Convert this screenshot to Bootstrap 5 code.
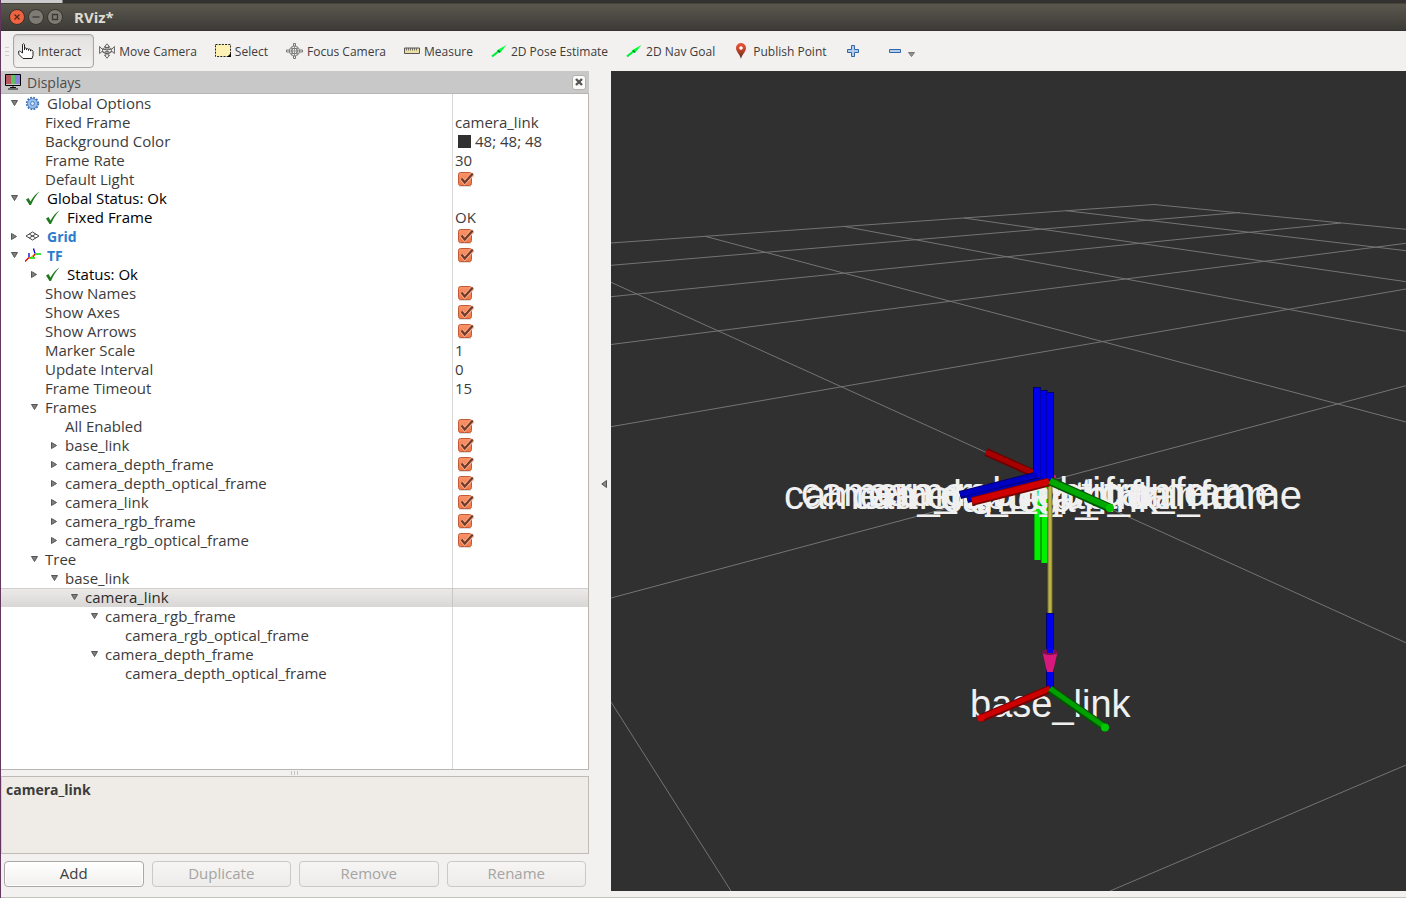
<!DOCTYPE html>
<html lang="en">
<head>
<meta charset="utf-8">
<meta name="viewport" content="width=device-width, initial-scale=1">
<title>RViz*</title>
<link href="https://cdn.jsdelivr.net/npm/bootstrap@5.3.0/dist/css/bootstrap.min.css" rel="stylesheet">
<style>
  body { font-family: "Open Sans", "Noto Sans", sans-serif; font-size: 15px; line-height: 19px; color: #3c3c3c; background: #f2f1f0; }
  .app-window { border-left: 1px solid #63355f; }
  .desk-strip { height: 3px; background: linear-gradient(90deg, #cfcccf 61px, #333230 62px); }
  .title-bar { height: 28px; padding-left: 8px; gap: 3px; background: linear-gradient(#5a574d, #3c3b37); border-bottom: 1px solid #35322f; border-top: 1px solid #45433c; color: #dfdbd2; }
  .title-bar h1 { font-size: 15px; line-height: 19px; font-weight: 700; margin: 0 0 0 8px; }
  .win-btn { width: 16px; height: 16px; padding: 0; border: 0; background: none; display: flex; }
  .tool-bar { height: 40px; padding-left: 4px; font-size: 12px; }
  .tool-btn { display: flex; align-items: center; gap: 4px; height: 34px; padding: 0 8px; border: 1px solid transparent; border-radius: 4px; background: none; color: #3c3c3c; white-space: nowrap; font-size: 12px; }
  .tool-btn svg, .tree-icon svg { display: block; flex: none; }
  .tool-btn.active { padding: 0 12px 0 4px; border-color: #aaa7a2; background: linear-gradient(#e2e1df, #f3f2f1); box-shadow: inset 0 1px 2px #cfcdca; }
  .dock { flex: 0 0 588px; }
  .dock-title { height: 23px; background: #c8c8c8; padding: 0 3px 0 4px; color: #4c4c4c; gap: 6px; border-bottom: 1px solid #b8b6b2; }
  .dock-title h2 { font-size: 14px; line-height: 19px; margin: 0; font-weight: 400; }
  .dock-close { width: 14px; height: 15px; padding: 0; border: 1px solid #b5b2ad; border-radius: 3px; background: #fbfbfa; display: flex; align-items: center; justify-content: center; }
  .tree-pane { background: linear-gradient(90deg, #fff 451px, #d9d8d6 451px, #d9d8d6 452px, #fff 452px); border-right: 1px solid #b9b6b0; border-bottom: 1px solid #b9b6b0; }
  .tree { width: 100%; table-layout: fixed; border-collapse: separate; border-spacing: 0; }
  .tree col:first-child { width: 452px; }
  .tree td { height: 19px; padding: 0 0 0 2px; white-space: nowrap; line-height: 19px; }
  .tree td:first-child { border-right: 1px solid #d9d8d6; }
  .node { display: flex; align-items: center; height: 19px; padding-left: 2px; }
  .node::before { content: ""; flex: none; width: 20px; height: 9px; }
  .opened::before { background: url("data:image/svg+xml,%3Csvg xmlns='http://www.w3.org/2000/svg' width='20' height='9'%3E%3Cpath d='M6.500 1.500h6l-3 5z' fill='%23808080' stroke='%23555'/%3E%3C/svg%3E") no-repeat; }
  .closed::before { background: url("data:image/svg+xml,%3Csvg xmlns='http://www.w3.org/2000/svg' width='20' height='9'%3E%3Cpath d='M6.500 1.500v6l5-3z' fill='%23808080' stroke='%23555'/%3E%3C/svg%3E") no-repeat; }
  .lv1 { padding-left: 22px; } .lv2 { padding-left: 42px; } .lv3 { padding-left: 62px; } .lv4 { padding-left: 82px; } .lv5 { padding-left: 102px; }
  .tree-icon { flex: none; width: 22px; }
  .state-ok { color: #000; }
  .display-name { color: #2a7ccc; font-weight: 700; font-size: 14px; }
  .row-picked { color: #2c2c2c; }
  .row-picked td { background: linear-gradient(#cfcecc 1px, #ebeae9 1px, #d8d7d5); }
  .tree .row-picked td:first-child { border-right-color: #c8c7c5; }
  .tick { appearance: none; display: block; width: 16px; height: 15px; margin: 0 0 0 3px; background: url("data:image/svg+xml,%3Csvg xmlns='http://www.w3.org/2000/svg' width='16' height='15'%3E%3Cdefs%3E%3ClinearGradient id='g' x2='0' y2='1'%3E%3Cstop stop-color='%23f9946c'/%3E%3Cstop offset='1' stop-color='%23f07746'/%3E%3C/linearGradient%3E%3C/defs%3E%3Crect x='.5' y='.5' width='13' height='13' rx='2' fill='url(%23g)' stroke='%23c35a33'/%3E%3Cpath d='M1 14.500h12' stroke='%23ddd'/%3E%3Cpath d='M3.500 6.500l3.200 4L14.800 2' fill='none' stroke='%23fbb294' stroke-width='4'/%3E%3Cpath d='M3.500 6.500l3.200 4L14.800 1.500' fill='none' stroke='%23713b29' stroke-width='2.200'/%3E%3C/svg%3E") no-repeat; }
  .swatch { width: 13px; height: 13px; background: #303030; margin: 0 4px 0 3px; }
  .dock-split { height: 6px; }
  .grip { width: 8px; height: 4px; background: repeating-linear-gradient(90deg, #c4c2bf 0 1px, transparent 1px 3px); }
  .help-pane { height: 78px; padding: 3px 4px; background: #efebe6; border: 1px solid #bfbcb6; border-left-color: #d5d2cd; font-weight: 700; font-size: 14px; }
  .actions { gap: 8px; padding: 7px 3px 5px 3px; height: 43px; }
  .act-btn { flex: 1 1 0; height: 26px; padding: 0 0 2px; border: 1px solid #aaa8a4; border-radius: 4px; background: linear-gradient(#fff, #f1f0ee); box-shadow: inset 0 0 0 1px #fff; color: #3c3c3c; font-size: 15px; line-height: 19px; }
  .act-btn:disabled { color: #a5a4a2; border-color: #cbc9c6; background: linear-gradient(#f6f5f4, #edecea); box-shadow: none; }
  .split { flex: 0 0 22px; }
  .scene { background: #303030; margin-bottom: 6px; min-width: 0; }
  .scene text { font-family: "Liberation Sans", Arial, sans-serif; fill: #f0f0f0; }
  .bottom-line { height: 1px; background: #c4c2bf; }
</style>
</head>
<body>
<svg width="0" height="0" class="position-absolute" aria-hidden="true">
  <symbol id="ok" viewBox="0 0 16 15"><path d="M1 8.500L3.500 7l2 3.500C8 6 10.500 3 14.500.5 10.500 5 8 9 6 14H4.500z" fill="#1d7a1d"/></symbol>
  <symbol id="pose" viewBox="0 0 16 16"><path d="M1 13.500L8 8" stroke="#0e3" stroke-width="2.200"/><path d="M15.500 2L5.500 7.500l3.500 2.500z" fill="#0f3"/><path d="M7 7.500l1.800 1.800" stroke="#063" stroke-width="1.400"/></symbol>
</svg>
<div class="app-window d-flex flex-column min-vh-100">
  <div class="desk-strip"></div>
  <header class="title-bar d-flex align-items-center">
    <button class="win-btn" aria-label="Close"><svg width="16" height="16"><circle cx="8" cy="8" r="7.500" fill="#ee6440" stroke="#3a2f2a"/><path d="M5.500 5.500l5 5m0-5l-5 5" stroke="#5b2a1b" stroke-width="1.400"/></svg></button>
    <button class="win-btn" aria-label="Minimize"><svg width="16" height="16"><circle cx="8" cy="8" r="7.500" fill="#7e7b73" stroke="#35342f"/><path d="M4.500 8h7" stroke="#3a3935" stroke-width="1.300"/></svg></button>
    <button class="win-btn" aria-label="Maximize"><svg width="16" height="16"><circle cx="8" cy="8" r="7.500" fill="#7e7b73" stroke="#35342f"/><path d="M5.500 5.500h5v5h-5z" fill="none" stroke="#3a3935" stroke-width="1.300"/></svg></button>
    <h1>RViz*</h1>
  </header>

  <nav class="tool-bar d-flex align-items-center" aria-label="Tools">
    <svg class="me-1" width="4" height="9"><path d="M0 .5h4M0 4.500h4M0 8.500h4" stroke="#cfcdca"/></svg>
    <button class="tool-btn active"><svg width="16" height="16" viewBox="0 0 16 16"><path d="M4.500 10V1.500q1-1.500 2 0V7 5.500q1.200-1 2 0V7 6q1.200-1 2 0v1.500-1q1.200-1 2 0V8q1-1.500 2-.5l.5 1v4l-1 3h-9L1 11.500.5 8.500q1-1 2 0z" fill="#fff" stroke="#222"/></svg>Interact</button>
    <button class="tool-btn ps-1"><svg width="16" height="16" viewBox="0 0 16 16" fill="#f2f1f0" stroke="#555" stroke-width=".9"><path d="M8 .8l2.500 3H9v8.400h1.500L8 15.200l-2.500-3H7V3.800H5.500z"/><path d="M.6 3.500v7L3 8.500l2.500.8L8 8l2.500 1.300 2.500-.8 2.400 2v-7L13 6 8 7 3 6z"/><ellipse cx="8" cy="7.500" rx="4.500" ry="3" fill="none"/></svg>Move Camera</button>
    <button class="tool-btn"><svg width="16" height="16" viewBox="0 0 16 16"><path d="M.5 1.500h15v12H.5z" fill="#fdf2b4" stroke="#222" stroke-dasharray="2 1.200"/><path d="M16 10v4h-4z"/></svg>Select</button>
    <button class="tool-btn"><svg width="17" height="16" viewBox="0 0 17 16" fill="none" stroke="#777"><circle cx="8.500" cy="8" r="5"/><circle cx="8.500" cy="8" r="2.800"/><path d="M8.500 3v10M3.500 8h10M5 5.500h7M5 10.500h7M6 4v8m5-8v8" stroke-width=".7"/><path d="M7.500 3V.5h2V3M7.500 13v2.500h2V13M3.500 7H.5v2h3M13.500 7h3v2h-3"/></svg>Focus Camera</button>
    <button class="tool-btn"><svg width="16" height="16" viewBox="0 0 16 16"><path d="M.5 5h15v5.500H.5z" fill="#eedfa5" stroke="#555"/><path d="M2.500 5v2.500m2-2.500v2.500m2-2.500v2.500m2-2.500v2.500m2-2.500v2.500m2-2.500v2.500" stroke="#555" stroke-width=".8"/></svg>Measure</button>
    <button class="tool-btn"><svg width="16" height="16"><use href="#pose"/></svg>2D Pose Estimate</button>
    <button class="tool-btn"><svg width="16" height="16"><use href="#pose"/></svg>2D Nav Goal</button>
    <button class="tool-btn"><svg width="16" height="16" viewBox="0 0 16 16"><defs><linearGradient id="pin" x2="0" y2="1"><stop stop-color="#ee5535"/><stop offset=".5" stop-color="#b8412a"/><stop offset="1" stop-color="#4a2814"/></linearGradient></defs><path d="M8 0a5 5 0 0 1 5 5c0 4-4 6-5 11C7 11 3 9 3 5a5 5 0 0 1 5-5z" fill="url(#pin)"/><circle cx="8" cy="5" r="1.800" fill="#fff"/></svg>Publish Point</button>
    <button class="tool-btn" aria-label="Add tool"><svg width="16" height="16" viewBox="0 0 16 16"><path d="M6.500 2.500h3v4h4v3h-4v4h-3v-4h-4v-3h4z" fill="#b4cdea" stroke="#3067ab"/></svg></button>
    <button class="tool-btn ms-2" aria-label="Remove tool"><svg width="29" height="16" viewBox="0 0 29 16"><path d="M2.500 6.500h11v3h-11z" fill="#b4cdea" stroke="#3067ab"/><path d="M21.500 9.500h6l-3 4z" fill="#909090" stroke="#777"/></svg></button>
  </nav>

  <main class="d-flex flex-grow-1">
    <section class="dock d-flex flex-column" aria-label="Displays">
      <div class="dock-title d-flex align-items-center">
        <svg width="16" height="16" viewBox="0 0 16 16"><path d="M1 1h5v9H1z" fill="#b65560"/><path d="M6 1h4v9H6z" fill="#5fc063"/><path d="M10 1h5v9h-5z" fill="#8780dc"/><path d="M.5.500h15v11H.5z" fill="none" stroke="#000"/><path d="M5 13.500h6M3 15h10M8 11v3" stroke="#111"/></svg>
        <h2>Displays</h2>
        <button class="dock-close ms-auto" aria-label="Close panel"><svg width="8" height="8"><path d="M1 1l6 6m0-6L1 7" stroke="#555" stroke-width="2.400"/></svg></button>
      </div>

      <div class="tree-pane flex-grow-1">
        <table class="tree" aria-label="Display properties">
          <colgroup><col><col></colgroup>
          <tbody>
          <tr><td><div class="node opened"><span class="tree-icon"><svg width="15" height="15" viewBox="-7.500 -7.500 15 15"><circle r="5.800" fill="none" stroke="#3c74b8" stroke-width="1.800" stroke-dasharray="1.800 1.240"/><circle r="5" fill="#9dbfe8" stroke="#4a82c4"/><circle r="2" fill="#d5e4f6" stroke="#4a82c4"/></svg></span>Global Options</div></td><td></td></tr>
          <tr><td><div class="node lv1">Fixed Frame</div></td><td>camera_link</td></tr>
          <tr><td><div class="node lv1">Background Color</div></td><td><div class="d-flex align-items-center"><span class="swatch"></span>48; 48; 48</div></td></tr>
          <tr><td><div class="node lv1">Frame Rate</div></td><td>30</td></tr>
          <tr><td><div class="node lv1"><label for="c1">Default Light</label></div></td><td><input class="tick" type="checkbox" id="c1" checked></td></tr>
          <tr class="state-ok"><td><div class="node opened"><span class="tree-icon"><svg width="16" height="15"><use href="#ok"/></svg></span>Global Status: Ok</div></td><td></td></tr>
          <tr><td><div class="node lv1 state-ok"><span class="tree-icon"><svg width="16" height="15"><use href="#ok"/></svg></span>Fixed Frame</div></td><td>OK</td></tr>
          <tr><td><div class="node closed"><span class="tree-icon"><svg width="15" height="11" viewBox="0 0 15 11" fill="none" stroke="#444"><path d="M7.500 1l6.500 4-6.500 4L1 5zM4.200 3l6.600 4M10.800 3L4.200 7"/></svg></span><label class="display-name" for="c2">Grid</label></div></td><td><input class="tick" type="checkbox" id="c2" checked></td></tr>
          <tr><td><div class="node opened"><span class="tree-icon"><svg width="16" height="15" viewBox="0 0 16 15" fill="none" stroke-width="1.300"><path d="M10 6L5 10" stroke="#e8c020"/><path d="M4 9.500V5M10 5.500L8.500.500" stroke="#00d"/><path d="M4 9.500l-4 4M10 6L8 9" stroke="#e00"/><path d="M4 10h6M10 6h6" stroke="#0d0"/></svg></span><label class="display-name" for="c3">TF</label></div></td><td><input class="tick" type="checkbox" id="c3" checked></td></tr>
          <tr class="state-ok"><td><div class="node lv1 closed"><span class="tree-icon"><svg width="16" height="15"><use href="#ok"/></svg></span>Status: Ok</div></td><td></td></tr>
          <tr><td><div class="node lv1"><label for="c4">Show Names</label></div></td><td><input class="tick" type="checkbox" id="c4" checked></td></tr>
          <tr><td><div class="node lv1"><label for="c5">Show Axes</label></div></td><td><input class="tick" type="checkbox" id="c5" checked></td></tr>
          <tr><td><div class="node lv1"><label for="c6">Show Arrows</label></div></td><td><input class="tick" type="checkbox" id="c6" checked></td></tr>
          <tr><td><div class="node lv1">Marker Scale</div></td><td>1</td></tr>
          <tr><td><div class="node lv1">Update Interval</div></td><td>0</td></tr>
          <tr><td><div class="node lv1">Frame Timeout</div></td><td>15</td></tr>
          <tr><td><div class="node lv1 opened">Frames</div></td><td></td></tr>
          <tr><td><div class="node lv2"><label for="c7">All Enabled</label></div></td><td><input class="tick" type="checkbox" id="c7" checked></td></tr>
          <tr><td><div class="node lv2 closed"><label for="c8">base_link</label></div></td><td><input class="tick" type="checkbox" id="c8" checked></td></tr>
          <tr><td><div class="node lv2 closed"><label for="c9">camera_depth_frame</label></div></td><td><input class="tick" type="checkbox" id="c9" checked></td></tr>
          <tr><td><div class="node lv2 closed"><label for="c10">camera_depth_optical_frame</label></div></td><td><input class="tick" type="checkbox" id="c10" checked></td></tr>
          <tr><td><div class="node lv2 closed"><label for="c11">camera_link</label></div></td><td><input class="tick" type="checkbox" id="c11" checked></td></tr>
          <tr><td><div class="node lv2 closed"><label for="c12">camera_rgb_frame</label></div></td><td><input class="tick" type="checkbox" id="c12" checked></td></tr>
          <tr><td><div class="node lv2 closed"><label for="c13">camera_rgb_optical_frame</label></div></td><td><input class="tick" type="checkbox" id="c13" checked></td></tr>
          <tr><td><div class="node lv1 opened">Tree</div></td><td></td></tr>
          <tr><td><div class="node lv2 opened">base_link</div></td><td></td></tr>
          <tr class="row-picked"><td><div class="node lv3 opened">camera_link</div></td><td></td></tr>
          <tr><td><div class="node lv4 opened">camera_rgb_frame</div></td><td></td></tr>
          <tr><td><div class="node lv5">camera_rgb_optical_frame</div></td><td></td></tr>
          <tr><td><div class="node lv4 opened">camera_depth_frame</div></td><td></td></tr>
          <tr><td><div class="node lv5">camera_depth_optical_frame</div></td><td></td></tr>
          </tbody>
        </table>
      </div>
      <div class="dock-split d-flex justify-content-center align-items-center"><span class="grip"></span></div>
      <div class="help-pane">camera_link</div>
      <div class="actions d-flex">
        <button class="act-btn">Add</button>
        <button class="act-btn" disabled>Duplicate</button>
        <button class="act-btn" disabled>Remove</button>
        <button class="act-btn" disabled>Rename</button>
      </div>
    </section>

    <div class="split d-flex align-items-center justify-content-center"><svg class="ms-2" width="6" height="8"><path d="M5.500.500v7L.8 4z" fill="#888" stroke="#555"/></svg></div>

    <section class="scene flex-grow-1 position-relative" aria-label="3D view">
      <svg class="position-absolute w-100 h-100" viewBox="611 71 795 820" preserveAspectRatio="xMidYMid slice">
        <!-- ground grid -->
        <g stroke="#747474" fill="none">
          <path d="M611 243L1154 204.500M611 265.300L1240 212.500M611 296.700L1341 223M611 344.500L1406 243.300M611 426.700L1406 289M611 598L1406 385.700M1110 891L1406 765"/>
          <path d="M1154 204.500L1406 229.300M1066 210.700L1406 250.700M964 218L1406 281.700M843.500 226.300L1406 331.300M705 236.300L1406 422M611 282.300L1406 642.800M611 702L731 891"/>
        </g>
        <path d="M986 452L1037 475" stroke="#6d0000" stroke-width="8"/><path d="M986 452L1037 474.500" stroke="#a80000" stroke-width="5"/>
        <path d="M1037.500 480V560M1044.500 480V563" stroke="#00a800" stroke-width="7"/><path d="M1037.500 480V560M1044.500 480V563" stroke="#00f000" stroke-width="5"/>
        <!-- frame names -->
        <g font-size="40">
          <text x="784" y="509">camera_depth_optical_frame</text>
          <text x="801" y="506">camera_rgb_optical_frame</text>
          <text x="852" y="509">camera_depth_frame</text>
          <text x="868" y="506">camera_rgb_frame</text>
          <text x="942" y="512">camera_link</text>
        </g>
        <text x="970" y="717" font-size="38">base_link</text>
        <path d="M1035 482l4-7h17v10z" fill="#c4186f"/>
        <g stroke="#00006e" stroke-width="8"><path d="M1037 387V477M1043.500 390V479M1050 392V481M960 495L1037 475.500M967 499L1045 480"/></g>
        <g stroke="#0000ec" stroke-width="6"><path d="M1037 388V477M1043.500 391V479M1050 393V481"/></g>
        <g stroke="#0000c0" stroke-width="5"><path d="M960 494.500L1037 475M967 498.500L1045 479.500"/></g>
        <path d="M1050 486V614" stroke="#77712c" stroke-width="5"/><path d="M1050 486V614" stroke="#bcb447" stroke-width="3"/>
        <path d="M972 501.500L1049 482" stroke="#7a0000" stroke-width="9"/><path d="M972 501L1049 481.500" stroke="#d00000" stroke-width="6"/>
        <path d="M1050 481L1111 508.500" stroke="#005500" stroke-width="9"/><path d="M1050 481L1111 508" stroke="#00a800" stroke-width="6"/><circle cx="1110" cy="508" r="4" fill="#00c400"/>
        <path d="M1050 613V690" stroke="#00006e" stroke-width="8"/><path d="M1050 614V690" stroke="#0000ec" stroke-width="6"/>
        <path d="M1042.500 652h15L1053 672h-6z" fill="#d8187d"/><ellipse cx="1050" cy="652" rx="8" ry="3" fill="#78104a"/><path d="M1047 645h6v8h-6z" fill="#0000ec"/>
        <path d="M1050 689L980 718.500" stroke="#7a0000" stroke-width="8"/><path d="M1050 688.500L980 718" stroke="#cc0000" stroke-width="5"/><circle cx="981" cy="718" r="3.500" fill="#d80000"/>
        <path d="M1050 689L1105 727.500" stroke="#005500" stroke-width="8"/><path d="M1050 688.500L1105 727" stroke="#00a000" stroke-width="5"/><circle cx="1105" cy="727.500" r="4" fill="#00c800"/>
      </svg>
    </section>
  </main>
  <div class="bottom-line"></div>
</div>
<script src="https://cdn.jsdelivr.net/npm/bootstrap@5.3.0/dist/js/bootstrap.bundle.min.js"></script>
</body>
</html>
